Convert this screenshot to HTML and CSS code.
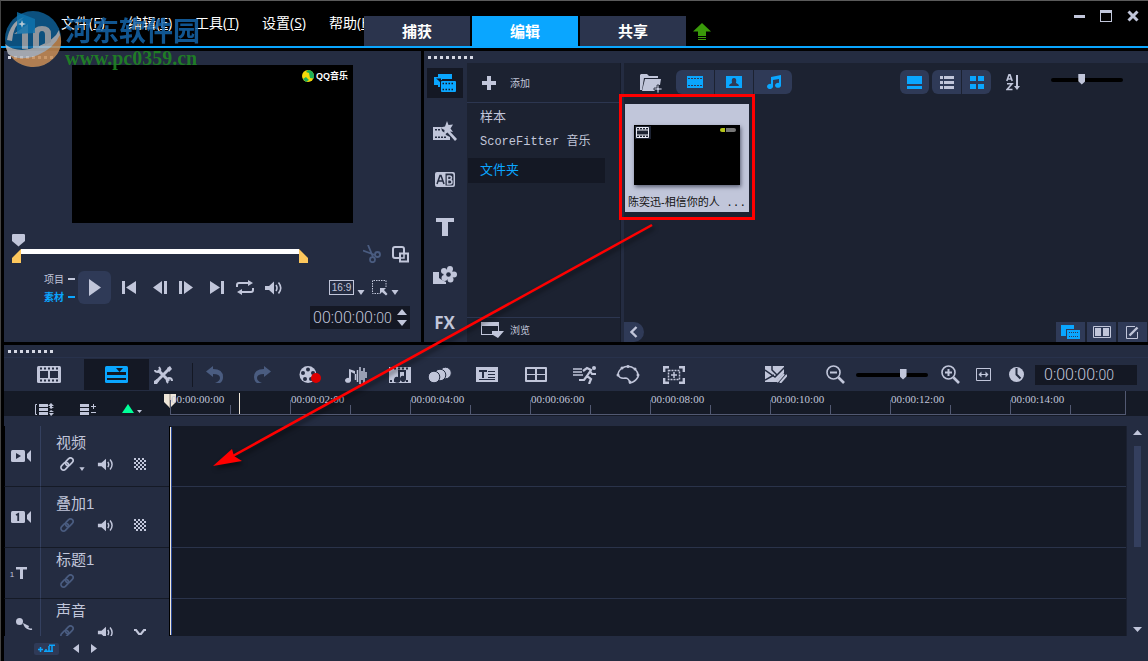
FILE: index.html
```html
<!DOCTYPE html>
<html lang="zh-CN">
<head>
<meta charset="utf-8">
<title>视频编辑</title>
<link rel="stylesheet" href="styles.css">
</head>
<body>
<svg class="sprite" width="0" height="0" aria-hidden="true">
  <defs>
    <symbol id="link" viewBox="0 0 14 14"><g fill="none" stroke="currentColor" stroke-width="1.7" transform="rotate(-45 7 7)"><rect x="-.5" y="4.4" width="8.6" height="5.2" rx="2.6"/><rect x="5.9" y="4.4" width="8.6" height="5.2" rx="2.6"/></g></symbol>
    <symbol id="speaker" viewBox="0 0 20 14"><path fill="currentColor" d="M1 5h4l5-4.500v13L5 9H1z"/><path fill="none" stroke="currentColor" stroke-width="1.600" d="M12 4q2 3 0 6M14.500 1.500q4.500 5.500 0 11"/></symbol>
    <symbol id="checker" viewBox="0 0 12 12"><path fill="none" stroke="currentColor" stroke-width="2" stroke-dasharray="2 2" d="M0 1h12M0 5h12M0 9h12"/><path fill="none" stroke="currentColor" stroke-width="2" stroke-dasharray="2 2" stroke-dashoffset="2" d="M0 3h12M0 7h12M0 11h12"/></symbol>
    <symbol id="caret" viewBox="0 0 8 5"><path fill="currentColor" d="M.5 0h7L4 5z"/></symbol>
    <symbol id="stack" viewBox="0 0 22 18"><path fill="currentColor" d="M4 0h14v5H8v8H4v-2H0V3h4z"/><path fill="#141824" d="M2 4.500h5V9L4 6zM6 6h16v12H6z"/><rect x="7" y="7" width="15" height="11" rx="1" fill="currentColor"/><path stroke="#141824" stroke-width="1.500" stroke-dasharray="1.500 1.500" d="M8.500 9.500h12M8.500 15.500h12"/></symbol>
  </defs>
</svg>

<header class="top">
  <nav class="menu" aria-label="菜单">
    <button>文件(<u>F</u>)</button><button>编辑(<u>E</u>)</button><button>工具(<u>T</u>)</button><button>设置(<u>S</u>)</button><button>帮助(<u>H</u>)</button>
  </nav>
  <nav class="tabs" aria-label="步骤">
    <button>捕获</button><button class="on">编辑</button><button>共享</button>
  </nav>
  <button class="update" aria-label="更新"><svg width="18" height="18" viewBox="0 0 18 18"><path fill="#3a9a0a" d="M9 0l9 8.500h-5V13H5V8.500H0zM5 14h8v1H5zM5 16h8v1H5z"/></svg></button>
  <div class="win">
    <button aria-label="最小化"><svg width="12" height="12"><path fill="#c1c6da" d="M1 5h11v3H1z"/></svg></button>
    <button aria-label="最大化"><svg width="12" height="12"><path fill="#c1c6da" fill-rule="evenodd" d="M0 0h12v12H0zM1 3v8h10V3z"/></svg></button>
    <button aria-label="关闭"><svg width="12" height="12"><path stroke="#c1c6da" stroke-width="3" d="M1.500 1.500l9 9M10.500 1.500l-9 9"/></svg></button>
  </div>
</header>

<main class="upper">
  <section class="panel preview" aria-label="预览">
    <div class="grip"><i></i></div>
    <div class="screen"><div class="qq"><svg width="12" height="12"><circle cx="6" cy="6" r="6" fill="#f5d90a"/><path fill="#1fae57" d="M6 0a6 6 0 0 1 5.500 8.500L8 8 7 3 4 2zM1 9l3-2 3 3-3 2z"/></svg><span>QQ音乐</span></div></div>
    <div class="scrubrow">
      <div class="scrub">
        <input type="range" min="0" max="100" value="0" aria-label="播放位置">
        <div class="trim">
          <svg width="9" height="14"><path fill="#fdc75c" d="M9 0v14H0V9z"/></svg><span></span><svg width="9" height="14"><path fill="#fdc75c" d="M0 0v14h9V9z"/></svg>
        </div>
      </div>
      <div class="scrubtools">
        <button class="dim" aria-label="剪切"><svg width="18" height="18" fill="none" stroke="currentColor" stroke-width="1.800"><path d="M5 0l5 12M0 5.500l12 4.500"/><circle cx="14.500" cy="9.500" r="2.500"/><circle cx="9.500" cy="14.700" r="2.500"/></svg></button>
        <button aria-label="放大预览"><svg width="17" height="17" fill="none" stroke="currentColor" stroke-width="2"><path d="M7 12H3a2 2 0 0 1-2-2V3a2 2 0 0 1 2-2h7a2 2 0 0 1 2 2v4"/><rect x="8" y="7.500" width="8" height="8"/><path stroke-width="1.500" d="M7 12h5V8"/></svg></button>
      </div>
    </div>
    <div class="transport">
      <div class="modes"><button>项目<i></i></button><button class="sel">素材<i></i></button></div>
      <button class="play" aria-label="播放"><svg width="12" height="17"><path fill="currentColor" d="M0 0l12 8.500L0 17z"/></svg></button>
      <div class="keys">
        <button aria-label="起始"><svg width="14" height="13"><path fill="currentColor" d="M0 0h3v13H0zM14 0v13L4 6.500z"/></svg></button>
        <button aria-label="上一帧"><svg width="14" height="13"><path fill="currentColor" d="M9 0v13L0 6.500zM11 0h3v13h-3z"/></svg></button>
        <button aria-label="下一帧"><svg width="14" height="13"><path fill="currentColor" d="M5 0v13l9-6.500zM0 0h3v13H0z"/></svg></button>
        <button aria-label="结束"><svg width="14" height="13"><path fill="currentColor" d="M11 0h3v13h-3zM0 0v13l10-6.500z"/></svg></button>
        <button aria-label="重复"><svg width="18" height="15"><path fill="none" stroke="currentColor" stroke-width="2" d="M1 7V5q0-2 2-2h10M17 8v2q0 2-2 2H5"/><path fill="currentColor" d="M12 0l5 3-5 3zM6 9v6l-5-3z"/></svg></button>
        <button aria-label="音量"><svg width="20" height="14"><use href="#speaker"/></svg></button>
      </div>
      <div class="view">
        <button class="ratio">16:9</button><svg class="drop" width="8" height="5"><use href="#caret"/></svg>
        <button aria-label="选区"><svg width="16" height="16"><path fill="none" stroke="currentColor" stroke-dasharray="1.500 1" d="M14 7V.5H.5v13H8"/><path fill="currentColor" d="M8 8h6l-2 2 3.500 4-1.500 1.500-4-3.500-2 2z"/></svg></button><svg class="drop" width="8" height="5"><use href="#caret"/></svg>
      </div>
    </div>
    <div class="clock">
      <output class="tc">00:00:00:<small>00</small></output>
      <span class="spin"><button aria-label="增加"><svg width="10" height="6"><path fill="currentColor" d="M0 6l5-6 5 6z"/></svg></button><button aria-label="减少"><svg width="10" height="6"><path fill="currentColor" d="M0 0l5 6 5-6z"/></svg></button></span>
    </div>
  </section>

  <section class="panel library" aria-label="素材库">
    <div class="grip"><i></i></div>
    <div class="libbody">
      <nav class="rail" aria-label="类别">
        <button class="on" aria-label="媒体"><svg width="22" height="18"><use href="#stack"/></svg></button>
        <button aria-label="即时项目"><svg width="24" height="20"><path fill="currentColor" d="M0 6h8l1 4 3 2 1 2 4 2v3H0z"/><path fill="#242c41" d="M2 8h2v1.500H2zM5 8h2v1.500H5zM2 15.500h2V17H2zM5 15.500h2V17H5zM8 15.500h2V17H8zM11 15.500h2V17h-2z"/><path fill="currentColor" d="M14 0l1.500 4 4.500-.500-2.500 4 2.500 3.500-3-.500L24 18l-2 2-7.500-8.500L11 14l.500-5L7 6.500l5-1z"/></svg></button>
        <button aria-label="转场"><svg width="20" height="15"><rect width="20" height="15" rx="2" fill="currentColor"/><path fill="#242c41" d="M10.500 1.500H17q1.500 0 1.500 1.500v9q0 1.500-1.500 1.500h-6.500z"/><path fill="none" stroke="#242c41" stroke-width="1.500" d="M2 12L5 3.500h1L9 12M3.500 9h4.500"/><path fill="none" stroke="#c1c6da" stroke-width="1.500" d="M12.500 3.500V12h2.500q2 0 2-2t-2-2.200h-2M12.500 4h2q2 0 2 1.800t-2 2"/></svg></button>
        <button aria-label="标题"><svg width="18" height="18"><path fill="currentColor" d="M0 0h18v4h-6v14H6V4H0z"/></svg></button>
        <button aria-label="图形"><svg width="24" height="18"><path fill="currentColor" d="M0 6h6v6l3 2 4 2v2H0z"/><g fill="currentColor"><circle cx="17" cy="3" r="3"/><circle cx="21" cy="8.500" r="3"/><circle cx="17.500" cy="13.500" r="3"/><circle cx="11.500" cy="12" r="3"/><circle cx="11" cy="5" r="3"/><circle cx="15.500" cy="8.500" r="5"/></g><circle cx="15.500" cy="8.500" r="2.300" fill="#242c41"/></svg></button>
        <button class="fx">FX</button>
      </nav>
      <div class="folders">
        <button class="add"><svg width="14" height="14"><path fill="currentColor" d="M5 0h4v5h5v4H9v5H5V9H0V5h5z"/></svg><span>添加</span></button>
        <ul>
          <li><button>样本</button></li>
          <li><button class="mono">ScoreFitter 音乐</button></li>
          <li><button class="sel">文件夹</button></li>
        </ul>
        <button class="browse"><svg width="23" height="17"><path fill="currentColor" fill-rule="evenodd" d="M0 0h18v9h5l-6 7-5-3H0zM1 4v8h10V9h6V4z"/></svg><span>浏览</span></button>
      </div>
      <div class="media">
        <div class="mtools">
          <button class="import" aria-label="导入"><svg width="23" height="19"><path fill="currentColor" d="M0 1l1-1h6l2 2h9v2H4L2 16H0z"/><path fill="currentColor" d="M5 5h16l-1 6h-2v3h-3v3H2z"/><path fill="currentColor" stroke="#1c2231" stroke-width=".8" d="M17 11h2v3h3v2h-3v3h-2v-3h-3v-2h3z"/></svg></button>
          <div class="seg wide">
            <button aria-label="视频"><svg width="16" height="12"><path fill="currentColor" d="M0 0h16v12H0z"/><path stroke="#2f3a57" stroke-width="1" stroke-dasharray="2 1" d="M1 2.500h14M1 9.500h14"/></svg></button>
            <button aria-label="照片"><svg width="16" height="12"><path fill="currentColor" d="M0 0h16v12H0z"/><path fill="#2f3a57" d="M3 10q0-2 3-3-1-5 2-5t2 5q3 1 3 3z"/></svg></button>
            <button aria-label="音频"><svg width="15" height="14"><path fill="currentColor" d="M5 2l10-2v10a3 2.500 0 1 1-2-2V4L7 5v6a3 2.600 0 1 1-2-2z"/></svg></button>
          </div>
          <div class="seg solo"><button aria-label="显示标题"><svg width="15" height="13"><path fill="currentColor" d="M0 0h15v8H0zM0 10h15v3H0z"/></svg></button></div>
          <div class="seg"><button class="pale" aria-label="列表视图"><svg width="14" height="13"><path fill="currentColor" d="M0 0h3v3H0zM4 0h10v3H4zM0 5h3v3H0zM4 5h10v3H4zM0 10h3v3H0zM4 10h10v3H4z"/></svg></button><button aria-label="缩略图视图"><svg width="14" height="13"><path fill="currentColor" d="M0 0h6v5H0zM8 0h6v5H8zM0 8h6v5H0zM8 8h6v5H8z"/></svg></button></div>
          <button class="sort" aria-label="排序"><svg width="15" height="17" fill="none" stroke="currentColor" stroke-width="1.600"><path d="M.8 7L3 .8h1L6.200 7M1.500 5h4M1 9.800h5L1 15.500h5.500"/><path stroke-width="2" d="M11 1v11"/><path fill="currentColor" stroke="none" d="M8 12h6l-3 4z"/></svg></button>
          <input class="size" type="range" min="0" max="100" value="42" aria-label="缩略图大小">
        </div>
        <figure class="clip">
          <div class="thumb"><svg width="16" height="13"><path fill="#1c2231" d="M0 0h16v13H0z"/><path fill="none" stroke="#e8eaf4" d="M1.500 1.500h12v10h-12zM1.500 4h12M1.500 9h12"/><path stroke="#e8eaf4" stroke-width="2" stroke-dasharray="1 2" d="M4 2.500h9M4 10.500h9"/></svg><b></b></div>
          <figcaption>陈奕迅-相信你的人<span> ...</span></figcaption>
        </figure>
        <div class="mfoot">
          <button class="collapse" aria-label="收起"><svg width="8" height="12"><path fill="none" stroke="currentColor" stroke-width="2.400" d="M6.500 1l-5 5 5 5"/></svg></button>
          <div class="views">
            <button class="sel" aria-label="素材库面板"><svg width="19" height="14"><path fill="currentColor" d="M0 0h13v4H5v7H0zM6 5h13v9H6z"/><path stroke="#2f3a57" stroke-dasharray="1 1" d="M8 7.500h10M8 11.500h10"/></svg></button>
            <button aria-label="两栏"><svg width="18" height="12"><path fill="none" stroke="currentColor" d="M.5.5h17v11H.5z"/><path fill="currentColor" d="M2 2h6v8H2zM10 2h6v8h-6z"/></svg></button>
            <button aria-label="选项"><svg width="13" height="13"><path fill="none" stroke="currentColor" d="M9 .5H.5v12h11V6"/><path stroke="currentColor" stroke-width="2.400" d="M3.500 9.500l8-8"/></svg></button>
          </div>
        </div>
      </div>
    </div>
  </section>
</main>

<section class="panel timeline" aria-label="时间轴">
  <div class="grip"><i></i></div>
  <div class="bar">
    <div class="modesw">
      <button aria-label="故事板视图"><svg width="24" height="17"><rect width="24" height="17" rx="1.500" fill="currentColor"/><path fill="#242c41" d="M3 5h8v7H3zM13 5h8v7h-8z"/><path stroke="#242c41" stroke-width="2" stroke-dasharray="2 2" d="M3 2.500h19M3 14.500h19"/></svg></button>
      <button class="on" aria-label="时间轴视图"><svg width="23" height="17"><rect width="23" height="17" rx="1.500" fill="currentColor"/><path fill="#141824" d="M2 6h19v3H2zM2 12h19v2H2zM11 2h7l-3.500 4z"/></svg></button>
      <button class="custom" aria-label="自定义工具栏"><svg width="19" height="18"><path fill="none" stroke="currentColor" stroke-width="3" d="M4 4l11 11M15 3L3 15"/><path fill="none" stroke="currentColor" stroke-width="2" d="M5 1q3 4-1 5-3 0-3-2M14 17q-3-3 1-5 3 0 3 3"/><path fill="currentColor" d="M13 2l3-2 2 3-3 3zM0 15l3-2 2 2-2 3H0z"/></svg></button>
    </div>
    <div class="history">
      <button class="dim" aria-label="撤销"><svg width="18" height="17"><path fill="currentColor" d="M7 0v3q10 0 10 8 0 4-3 6H9q5-2 5-5 0-4-7-4v3L0 5.500z"/></svg></button>
      <button class="dim" aria-label="重复"><svg width="18" height="17"><path fill="currentColor" d="M11 0v3Q1 3 1 11q0 4 3 6h5q-5-2-5-5 0-4 7-4v3l7-5.500z"/></svg></button>
    </div>
    <div class="tools">
      <button aria-label="录制"><svg width="22" height="18"><circle cx="9" cy="8.500" r="8.500" fill="currentColor"/><g fill="#242c41"><circle cx="9" cy="3.500" r="2"/><circle cx="4" cy="7" r="2"/><circle cx="14" cy="7" r="2"/><circle cx="6" cy="13" r="2"/><circle cx="12" cy="13" r="2"/></g><circle cx="17" cy="12" r="5" fill="#d00"/></svg></button>
      <button aria-label="混音器"><svg width="22" height="18"><path fill="currentColor" d="M4 3l6 2v3L6 6v8a3 2.500 0 1 1-2-2z"/><path stroke="currentColor" stroke-width="1.500" d="M10.500 8v6M12.500 4v12M15 1v17M17 5v9M19 2v15M21 6v6"/></svg></button>
      <button aria-label="自动音乐"><svg width="22" height="16"><path fill="currentColor" d="M0 0h22v16H0z"/><path stroke="#242c41" stroke-width="2" stroke-dasharray="2 2" d="M1 1.500h20M1 14h20"/><path fill="#242c41" d="M9 3h8v9a3 3 0 1 1-2-3V5h-4v8a3 3 0 1 1-2-3z"/></svg></button>
      <button aria-label="运动追踪"><svg width="24" height="16"><g fill="currentColor" stroke="#242c41"><circle cx="17.500" cy="6" r="5.800"/><circle cx="12" cy="8" r="5.800"/><circle cx="6" cy="10" r="5.800"/></g></svg></button>
      <button aria-label="字幕"><svg width="22" height="15"><path fill="currentColor" d="M0 0h22v15H0z"/><path fill="#242c41" d="M3 3h8v2H8v6H6V5H3zM12 4h7v1h-7zM12 7h7v1h-7zM12 10h7v1h-7zM3 12h16v1H3z"/></svg></button>
      <button aria-label="多相机"><svg width="22" height="15"><rect width="22" height="15" rx="1" fill="currentColor"/><path fill="#242c41" d="M2 2h8v5H2zM12 2h8v5h-8zM2 8h8v5H2zM12 8h8v5h-8z"/></svg></button>
      <button aria-label="时间重新映射"><svg width="24" height="18"><circle cx="21" cy="2" r="2" fill="currentColor"/><path fill="none" stroke="currentColor" stroke-width="2.200" d="M10 5l4-3 4 2-4 6 4 3-2 5M14 10l-3 4H6M17 5l2 3h4"/><path stroke="currentColor" stroke-width="1.500" d="M0 3h9M0 6h9M0 9h10"/></svg></button>
      <button aria-label="遮罩"><svg width="24" height="19"><path fill="none" stroke="currentColor" stroke-width="1.500" d="M6 3Q13-1 19 4q4 4 3 8-3 5-8 6-1-5-5-5-5 1-7-3 0-4 4-7z"/><g fill="currentColor"><circle cx="6" cy="3" r="1.500"/><circle cx="12" cy="1.500" r="1.500"/><circle cx="19" cy="4" r="1.500"/><circle cx="22" cy="10" r="1.500"/><circle cx="14" cy="17" r="1.500"/><circle cx="2" cy="10" r="1.500"/></g></svg></button>
      <button aria-label="平移和缩放"><svg width="22" height="18"><path fill="none" stroke="currentColor" stroke-width="2.400" d="M1.200 6V1.200H6M16 1.200h4.800V6M20.800 12v4.800H16M6 16.800H1.200V12"/><path fill="none" stroke="currentColor" stroke-width="1.500" stroke-dasharray="2 1" d="M5.500 4.500h11v9h-11z"/><path stroke="currentColor" stroke-width="1.500" d="M8 9h6M11 6v6"/></svg></button>
    </div>
    <div class="zoom">
      <button class="mask" aria-label="分屏模板"><svg width="22" height="17"><path fill="currentColor" d="M0 0h19v16H0z"/><path fill="none" stroke="#242c41" stroke-width="1.500" d="M0 4l10 7L20 1M7 0v4l5 5M0 14l9-5"/><path stroke="#242c41" stroke-width="6" d="M14 17l8-9"/><path stroke="currentColor" stroke-width="2" d="M12 16l7-8M15 17l7-8"/></svg></button>
      <button aria-label="缩小"><svg width="19" height="19" fill="none" stroke="currentColor"><circle cx="7.500" cy="7.500" r="6.500" stroke-width="1.600"/><path stroke-width="2" d="M4 7.500h7"/><path stroke-width="2.600" d="M12.500 12.500l5.500 5.500"/></svg></button>
      <input class="size" type="range" min="0" max="100" value="67" aria-label="缩放">
      <button aria-label="放大"><svg width="19" height="19" fill="none" stroke="currentColor"><circle cx="7.500" cy="7.500" r="6.500" stroke-width="1.600"/><path stroke-width="2" d="M4 7.500h7M7.500 4v7"/><path stroke-width="2.600" d="M12.500 12.500l5.500 5.500"/></svg></button>
      <button class="fit" aria-label="适合窗口"><svg width="15" height="13"><path fill="none" stroke="currentColor" d="M.5.5h14v12H.5zM3 6.500h9"/><path fill="currentColor" d="M2.500 6.500l3-3v6zM12.500 6.500l-3-3v6z"/></svg></button>
      <button aria-label="时长"><svg width="15" height="15"><circle cx="7.500" cy="7.500" r="7.500" fill="currentColor"/><path fill="none" stroke="#242c41" stroke-width="2" d="M7.500 1v6.500l4 4"/></svg></button>
      <output class="tc dur">0:00:00:<small>00</small></output>
    </div>
  </div>
  <div class="rulerrow">
    <div class="trackbar">
      <button aria-label="显示全部轨道"><svg width="20" height="13"><path fill="currentColor" d="M4 1h9v3H4zM4 5h9v3H4zM4 9h9v3H4zM16 0l3 3h-2v1h-2V3h-2zM14 10h5l-3 3zM14 4h5l-3 2zM16 7l3 2h-5z"/><path fill="none" stroke="currentColor" d="M2 1.500H.5v10H2"/></svg></button>
      <button aria-label="轨道管理器"><svg width="17" height="11"><path fill="currentColor" d="M0 0h9v3H0zM0 4h9v3H0zM0 8h9v3H0zM11 2h5v1h-5zM13 0h1v5h-1zM11 8h5v1h-5z"/></svg></button>
      <button aria-label="添加章节"><svg width="20" height="10"><path fill="#0f9" d="M6 0l6 9H0z"/><path fill="#c1c6da" d="M15 6h5l-2.500 3z"/></svg></button>
    </div>
    <div class="ruler">
      <svg class="head" width="12" height="14"><path fill="#efe6d8" d="M0 0h12v8l-6 6-6-6z"/><path stroke="#8a8378" d="M6 0v14"/></svg><i class="cue"></i>
      <span>00:00:00:00</span><span>00:00:02:00</span><span>00:00:04:00</span><span>00:00:06:00</span><span>00:00:08:00</span><span>00:00:10:00</span><span>00:00:12:00</span><span>00:00:14:00</span>
    </div>
  </div>
  <div class="tracks">
    <div class="rows">
      <div class="track"><div class="kind"><svg width="20" height="12"><rect width="14" height="12" rx="1.500" fill="currentColor"/><path fill="currentColor" d="M16 4l4-4v12l-4-4z"/><path fill="#242c41" d="M5 3l5 3-5 3z"/></svg></div>
        <div class="info"><h3>视频</h3><div class="icons"><button aria-label="链接"><svg width="14" height="14"><use href="#link"/></svg></button><svg class="mini" width="6" height="4"><use href="#caret"/></svg><button class="snd" aria-label="静音"><svg width="18" height="13"><use href="#speaker"/></svg></button><button aria-label="透明"><svg width="12" height="12"><use href="#checker"/></svg></button></div></div><div class="lane"></div></div>
      <div class="track"><div class="kind"><svg width="20" height="12"><rect width="14" height="12" rx="1.500" fill="currentColor"/><path fill="currentColor" d="M16 4l4-4v12l-4-4z"/><path fill="none" stroke="#242c41" stroke-width="1.800" d="M5 4l2.200-1v7"/></svg></div>
        <div class="info"><h3>叠加1</h3><div class="icons"><button class="dim" aria-label="链接"><svg width="14" height="14"><use href="#link"/></svg></button><i class="mini"></i><button class="snd" aria-label="静音"><svg width="18" height="13"><use href="#speaker"/></svg></button><button aria-label="透明"><svg width="12" height="12"><use href="#checker"/></svg></button></div></div><div class="lane"></div></div>
      <div class="track short"><div class="kind title"><small>1</small><svg width="11" height="12"><path fill="currentColor" d="M0 0h11v2.500H7V12H4V2.500H0z"/></svg></div>
        <div class="info"><h3>标题1</h3><div class="icons"><button class="dim" aria-label="链接"><svg width="14" height="14"><use href="#link"/></svg></button></div></div><div class="lane"></div></div>
      <div class="track short"><div class="kind voice"><svg width="17" height="12"><circle cx="3.500" cy="3.500" r="3.500" fill="currentColor"/><path fill="currentColor" d="M7 5l6 3-1 3q-4-1-5-6z"/><path fill="none" stroke="currentColor" stroke-width="1.500" d="M10 9q3 3 6 2"/></svg></div>
        <div class="info"><h3>声音</h3><div class="icons"><button class="dim" aria-label="链接"><svg width="14" height="14"><use href="#link"/></svg></button><i class="mini"></i><button class="snd" aria-label="静音"><svg width="18" height="13"><use href="#speaker"/></svg></button><button aria-label="混音"><svg width="12" height="9"><path fill="none" stroke="currentColor" stroke-width="2.200" d="M0 2h2l3 4h2l3-4h2"/></svg></button></div></div><div class="lane"></div></div>
      <i class="playhead"></i>
    </div>
    <div class="vscroll">
      <button aria-label="向上"><svg width="9" height="5"><path fill="currentColor" d="M0 5l4.500-5L9 5z"/></svg></button><i></i><button aria-label="向下"><svg width="9" height="5"><path fill="currentColor" d="M0 0l4.500 5L9 0z"/></svg></button>
    </div>
  </div>
  <footer class="foot">
    <button class="addtrack" aria-label="添加轨道"><svg width="17" height="9"><path fill="none" stroke="#0aa6ff" stroke-width="1.500" d="M0 5.500h5M2.500 3v5M6 7.200h9M8 7V5M11 7V2M14 7V1M11 1.200h6"/></svg></button>
    <button aria-label="向左"><svg width="6" height="9"><path fill="currentColor" d="M6 0v9L0 4.500z"/></svg></button>
    <button aria-label="向右"><svg width="6" height="9"><path fill="currentColor" d="M0 0v9l6-4.500z"/></svg></button>
  </footer>
</section>

<div class="stamp">
  <svg width="58" height="58" viewBox="0 0 58 58"><circle cx="29" cy="29" r="28" fill="#0f5f94"/><path fill="#c98d55" d="M2 38q28 8 54-14 4 14-6 24-10 10-23 9Q9 55 2 38z"/><path fill="#b9bcc2" d="M1 34q12 10 32 3 18-7 22-17l1 5q-6 13-22 20-18 7-30-1z"/><path fill="#b9bcc2" d="M3 30Q6 12 20 7 9 16 8 31z"/><path fill="#a9b0b8" d="M10 24l14-10v25h-6V23zM29 39V24q0-8 9-8t9 8v8l-6 3V25q0-4-3-4t-3 4v13z"/><path fill="#1089cf" d="M13 2l18 7v14l-18 1z" opacity=".8"/><path fill="#d5ecfa" d="M18 10l1 3 3 1-3 1-1 3-1-3-3-1 3-1z"/></svg>
  <div><strong>河东软件园</strong><em>www.pc0359.cn</em></div>
</div>
<div class="frame"></div>
<svg class="arrow" width="460" height="260"><path stroke="red" stroke-width="2.500" d="M447 5L26 237"/><path fill="red" d="M8 246l19-17 2 7 8 5z"/></svg>
</body>
</html>
```
FILE: styles.css
```css
:root {
  --bg: #242c41;
  --deep: #1c2231;
  --dark: #141824;
  --lane: #151a26;
  --key: #2f3a57;
  --ink: #c1c6da;
  --blue: #0aa6ff;
  --dim: #4a5c80;
  --cjk: "Noto Sans CJK SC", sans-serif;
}
* { box-sizing: border-box; }
body {
  position: relative;
  display: flex;
  flex-direction: column;
  height: 100vh;
  margin: 0;
  overflow: hidden;
  border-top: 1px solid #5a5a5a;
  border-left: 1px solid #444;
  background: #000;
  color: var(--ink);
  font: 12px/16px "Liberation Sans", var(--cjk);
}
button {
  display: flex;
  align-items: center;
  justify-content: center;
  margin: 0;
  padding: 0;
  border: 0;
  background: none;
  color: inherit;
  font: inherit;
  white-space: nowrap;
}
svg { display: block; flex: none; }
.sprite { position: absolute; }
.dim { color: var(--dim); }

/* Title bar */
.top {
  display: flex;
  align-items: flex-end;
  height: 47px;
  flex: none;
  border-bottom: 2px solid var(--blue);
}
.menu {
  display: flex;
  width: 303px;
  height: 33px;
  margin-left: 60px;
  overflow: hidden;
  color: #fff;
  font: 14px/20px "Open Sans", var(--cjk);
}
.menu button { flex: 0 0 67px; justify-content: flex-start; height: 20px; }
.tabs { display: flex; gap: 2px; }
.tabs button {
  width: 106px;
  height: 30px;
  background: #2b344d;
  color: #fff;
  font: bold 15px/20px var(--cjk);
}
.tabs .on { background: var(--blue); }
.update { margin: 0 0 5px 7px; }
.win { display: flex; gap: 15px; margin: 0 9px 24px auto; }

/* Panels */
.panel { background: var(--bg); min-width: 0; }
.grip { height: 12px; padding: 5px 4px; }
.grip i {
  display: block;
  width: 45px;
  height: 3px;
  background: repeating-linear-gradient(90deg, #d5d8e4 0 3px, transparent 3px 6px);
}
.upper {
  display: grid;
  grid-template-columns: minmax(0, 417fr) minmax(0, 724fr);
  gap: 3px;
  flex: none;
  margin: 3px 0 3px 3px;
}

/* Preview */
.preview { padding-bottom: 13px; }
.screen { display: flex; justify-content: flex-end; margin: 2px 68px 0; aspect-ratio: 16 / 9; background: #000; }
.qq { display: flex; gap: 2px; padding: 5px 5px 0 0; color: #fff; font: bold 9px/12px "Liberation Sans", var(--cjk); }
.scrubrow { display: flex; align-items: center; justify-content: space-between; margin: 10px 12px 0 8px; }
.scrub { flex: 0 1 296px; }
.scrub input {
  display: block;
  appearance: none;
  width: 100%;
  height: 13px;
  margin: 0 0 2px;
  background: none;
}
.scrub input::-webkit-slider-thumb {
  appearance: none;
  width: 13px;
  height: 13px;
  background: var(--ink);
  clip-path: polygon(8% 0, 92% 0, 100% 10%, 100% 58%, 50% 100%, 0 58%, 0 10%);
}
.trim { display: flex; }
.trim span { flex: 1; height: 5px; background: #fff; }
.scrubtools { display: flex; gap: 11px; padding-top: 12px; }
.transport { display: flex; align-items: center; margin-top: 8px; padding: 0 22px 0 40px; }
.modes { display: grid; gap: 3px; width: 34px; font: 10px/15px var(--cjk); }
.modes button { justify-content: space-between; width: 31px; height: 15px; }
.modes i { width: 7px; height: 2px; background: currentColor; }
.modes .sel { color: var(--blue); font-weight: bold; }
.play { width: 33px; height: 33px; border-radius: 6px; background: var(--key); }
.keys { display: grid; grid-template-columns: 36px 26px 26px 36px 20px 38px; }
.view { display: flex; align-items: center; gap: 3px; margin-left: auto; }
.ratio { width: 25px; height: 15px; border: 1px solid var(--ink); font: 10px/12px "Liberation Sans", sans-serif; }
.view .drop { margin-top: 9px; }
.view .drop + button { margin-left: 4px; }
.clock {
  display: flex;
  align-items: center;
  justify-content: space-between;
  width: 100px;
  height: 23px;
  margin: 2px 11px 0 auto;
  padding: 0 3px;
  background: var(--dark);
}
.tc { font: 300 16px/20px Roboto, sans-serif; white-space: nowrap; }
.tc small { font-size: 14px; }
.spin { display: grid; gap: 5px; }

/* Library */
.library { display: flex; flex-direction: column; }
.libbody { display: grid; grid-template-columns: 43px 154px minmax(0, 1fr); flex: 1; }
.rail { display: grid; align-content: start; justify-items: center; gap: 18px; padding: 5px 2px 0 0; }
.rail button { width: 36px; height: 30px; }
.rail .on { background: var(--dark); color: var(--blue); }
.rail .fx { font: bold 17px/20px "Open Sans", sans-serif; }
.folders { display: flex; flex-direction: column; background: var(--deep); border-right: 1px solid #161b28; }
.add, .browse { justify-content: flex-start; font: 10px/16px var(--cjk); }
.add { gap: 14px; height: 40px; padding-left: 15px; border-bottom: 1px solid #2c3650; }
.browse { gap: 6px; height: 25px; margin-top: auto; padding-left: 14px; border-top: 1px solid #2c3650; }
.folders ul { margin: 2px 15px 0 1px; padding: 0; list-style: none; font: 13px/25px "Liberation Mono", var(--cjk); }
.folders li button { justify-content: flex-start; width: 100%; height: 25px; padding-left: 12px; }
.folders li .mono { font-size: 12px; }
.folders li:last-child { margin-top: 3px; }
.folders .sel { background: var(--dark); color: var(--blue); }
.media { display: flex; flex-direction: column; border-left: 3px solid var(--bg); background: var(--deep); }
.mtools { display: flex; align-items: center; height: 38px; padding-right: 25px; }
.import { margin: 2px 13px 0 16px; }
.seg { display: flex; gap: 1px; color: var(--blue); }
.seg button { width: 29px; height: 24px; background: var(--key); }
.seg.wide button { width: 38px; }
.seg button:first-child { border-radius: 6px 0 0 6px; }
.seg button:last-child { border-radius: 0 6px 6px 0; }
.seg.solo { margin: 0 3px 0 auto; }
.seg.solo button { border-radius: 6px; }
.seg .pale { color: var(--ink); }
.sort { margin: 0 30px 0 15px; }
.size { appearance: none; width: 72px; height: 12px; margin: 0; background: none; }
.mtools .size { margin-bottom: 5px; }
.size::-webkit-slider-runnable-track { height: 4px; border-radius: 2px; background: #000; }
.size::-webkit-slider-thumb {
  appearance: none;
  width: 7px;
  height: 11px;
  margin-top: -4px;
  background: var(--ink);
  clip-path: polygon(0 0, 100% 0, 100% 70%, 50% 100%, 0 70%);
}
.clip { width: 124px; margin: 3px 0 0 1px; padding: 21px 9px 0; background: var(--ink); }
.thumb {
  display: flex;
  align-items: flex-start;
  justify-content: space-between;
  height: 60px;
  padding: 1px 4px 0 1px;
  background: #000;
  box-shadow: 1px 2px 4px #5c6075;
}
.thumb b { width: 16px; height: 4px; margin-top: 2px; border-radius: 2px; background: linear-gradient(90deg, #b5c51a 0 5px, #000 5px 6px, #777 6px); }
.clip figcaption { margin: 8px -9px 0; padding: 1px 3px 1px; color: #111; font: 11px/16px "Liberation Sans", var(--cjk); white-space: pre; }
.clip figcaption span { font-family: "Liberation Mono", monospace; }
.mfoot { display: flex; align-items: flex-end; justify-content: space-between; margin-top: auto; }
.collapse { width: 20px; height: 20px; border-radius: 0 10px 10px 0; background: var(--key); }
.views { display: flex; gap: 2px; padding-right: 1px; }
.views button { width: 29px; height: 20px; background: var(--key); }
.views .sel { color: var(--blue); }

/* Timeline */
.timeline { display: flex; flex-direction: column; flex: 1; min-height: 0; margin-left: 3px; }
.timeline .grip { height: 13px; border-bottom: 1px solid #28324c; }
.bar { display: flex; align-items: center; flex: none; height: 33px; padding-right: 11px; }
.modesw { display: grid; grid-template-columns: 65px 65px 38px; margin-left: 15px; }
.modesw button { height: 31px; }
.modesw button:first-child { padding-right: 6px; }
.modesw .on { margin: 0; }
.modesw { margin-left: 15px; }
.modesw .custom { justify-content: flex-start; padding-left: 5px; }
.modesw .on { background: var(--dark); color: var(--blue); }
.history { display: grid; grid-template-columns: 43px 51px; height: 24px; margin-left: 5px; border-left: 1px solid #141824; }
.tools { display: grid; grid-template-columns: 46px 46px 42px 38px 56px 42px 56px 30px 62px; }
.zoom { display: flex; align-items: center; gap: 11px; margin-left: auto; }
.zoom .mask { margin-right: 28px; }
.zoom .size { margin-right: 2px; }
.zoom .fit { margin: 0 7px 0 5px; }
.dur { width: 102px; padding-left: 9px; background: var(--dark); }
.rulerrow { display: flex; flex: none; padding-right: 22px; background: var(--lane); border-bottom: 10px solid var(--bg); }
.trackbar { display: grid; grid-template-columns: 50px 36px 52px; flex: 0 0 166px; padding-left: 16px; padding-top: 11px; }
.trackbar button { height: 14px; }
.ruler { position: relative; display: flex; flex: 1; min-width: 0; height: 24px; margin-bottom: 1px; border-bottom: 1px solid #525972; border-right: 1px solid #525972; }
.ruler span {
  position: relative;
  flex: 0 1 120px;
  min-width: 0;
  padding-left: 1px;
  background: linear-gradient(#525972, #525972) 0 100% / 1px 14px no-repeat, linear-gradient(#525972, #525972) 60px 100% / 1px 9px no-repeat;
  font: 11px/16px "Liberation Serif", serif;
}
.ruler span:last-of-type { flex-basis: 115px; }
.head { position: absolute; left: -6px; top: 3px; }
.cue { position: absolute; left: 69px; top: 2px; width: 1px; height: 21px; background: #efe6d8; }
.tracks { display: flex; flex: 1; min-height: 0; }
.rows { position: relative; flex: 1; min-width: 0; overflow: hidden; background: #000; }
.track { display: grid; grid-template-columns: 37px 128px minmax(0, 1fr); height: 61px; }
.track.short { height: 51px; }
.kind, .info { border-bottom: 1px solid #151a26; background: var(--bg); }
.kind { display: flex; align-items: center; justify-content: center; padding-right: 3px; border-left: 1px solid #000; border-right: 1px solid #34405f; }
.kind.title { gap: 2px; padding-right: 8px; }
.kind small { padding-top: 4px; font-size: 8px; line-height: 8px; }
.kind.voice { padding-left: 6px; }
.info { padding: 8px 0 0 15px; }
.short .info { padding-top: 3px; }
.info h3 { margin: 0 0 2px; font: 15px/18px "Liberation Sans", var(--cjk); }
.icons { display: flex; align-items: center; height: 20px; padding-left: 4px; }
.mini { width: 6px; margin: 10px 12px 0 5px; }
.snd { margin-right: 19px; }
.lane { margin-left: 1px; border-bottom: 1px solid #2a334a; background: var(--lane); }
.playhead { position: absolute; left: 166px; top: 1px; bottom: 1px; width: 2px; background: #efe6d8; border-right: 1px solid #2a4a9a; }
.vscroll { display: flex; flex-direction: column; align-items: center; flex: 0 0 22px; padding: 4px 0; border-left: 1px solid #1a2030; }
.vscroll i { width: 7px; height: 101px; margin: 11px 0 auto; background: #343f5e; }
.foot { display: flex; align-items: center; gap: 12px; flex: none; height: 25px; padding-left: 30px; }
.addtrack { width: 25px; height: 12px; border-radius: 2px; background: var(--key); margin-right: 2px; }

/* Overlays */
.stamp { position: absolute; left: 3px; top: 9px; display: flex; gap: 3px; opacity: .85; pointer-events: none; }
.stamp div { display: grid; align-content: start; padding-top: 3px; white-space: nowrap; }
.stamp strong { color: #1565ab; font: bold 27px/34px var(--cjk); }
.stamp em { color: #1f8a22; font: normal bold 20px/22px "Liberation Serif", serif; }
.frame { position: absolute; left: 618px; top: 93px; width: 136px; height: 126px; border: 3px solid red; pointer-events: none; }
.arrow { position: absolute; left: 204px; top: 219px; filter: drop-shadow(2px 3px 2px rgba(0, 0, 0, .5)); pointer-events: none; }
```
